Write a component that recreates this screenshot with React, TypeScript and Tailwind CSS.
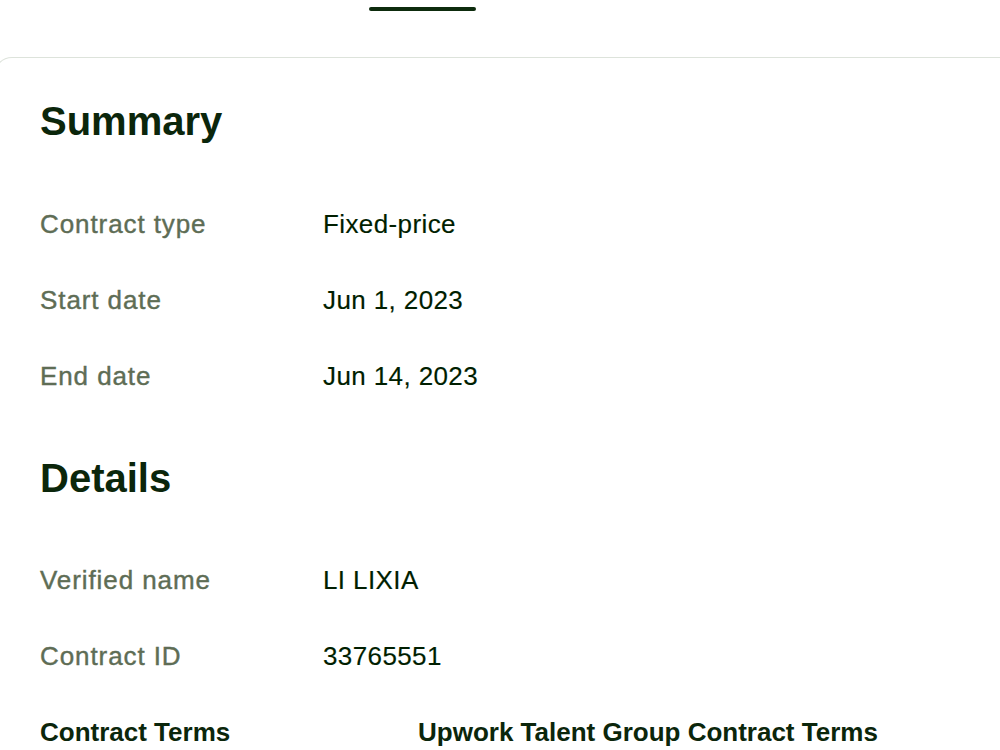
// ::Component:: ContractSummary

import React from 'react';

type Row = { label: string; value: string };

const summaryRows: Row[] = [
  { label: 'Contract type', value: 'Fixed-price' },
  { label: 'Start date', value: 'Jun 1, 2023' },
  { label: 'End date', value: 'Jun 14, 2023' },
];

const detailRows: Row[] = [
  { label: 'Verified name', value: 'LI LIXIA' },
  { label: 'Contract ID', value: '33765551' },
];

function InfoRow({ label, value }: Row) {
  return (
    <div className="flex items-center text-[26px] leading-[28px]">
      <span className="w-[283px] shrink-0 tracking-[0.035em] text-[#5e6d55] [-webkit-text-stroke:0.4px_#5e6d55]">
        {label}
      </span>
      <span className="tracking-[0.015em] text-[#001e00] [-webkit-text-stroke:0.15px_#001e00]">{value}</span>
    </div>
  );
}

/**
 * ContractSummary: summary + details card under the tab strip
 */
export default function App() {
  return (
    <div
      className="min-h-[750px] w-[1000px] overflow-hidden bg-white"
      style={{ fontFamily: '"Liberation Sans", Arial, sans-serif' }}
    >
      {/* Tab strip: only the active underline is in view */}
      <div className="flex h-[57px] items-start pl-[369px] pt-[7px]">
        <div className="h-[4px] w-[107px] rounded-full bg-[#0d2b0d]" />
      </div>

      {/* Card */}
      <section className="-ml-[6px] -mr-[20px] rounded-t-[18px] border border-b-0 border-[#dde3db] pl-[45px] pt-[39px]">
        <h2 className="text-[40px] font-bold leading-[48px] text-[#0b260b]">Summary</h2>
        <div className="mt-[65px] flex flex-col gap-[48px]">
          {summaryRows.map((row) => (
            <InfoRow key={row.label} {...row} />
          ))}
        </div>

        <h2 className="mt-[64px] text-[40px] font-bold leading-[48px] text-[#0b260b]">Details</h2>
        <div className="mt-[64px] flex flex-col gap-[48px]">
          {detailRows.map((row) => (
            <InfoRow key={row.label} {...row} />
          ))}
          <div className="flex items-center text-[26px] font-bold leading-[28px] text-[#0b260b]">
            <span className="w-[378px] shrink-0">Contract Terms</span>
            <a href="#" className="whitespace-nowrap">
              Upwork Talent Group Contract Terms
            </a>
          </div>
        </div>
      </section>
    </div>
  );
}
